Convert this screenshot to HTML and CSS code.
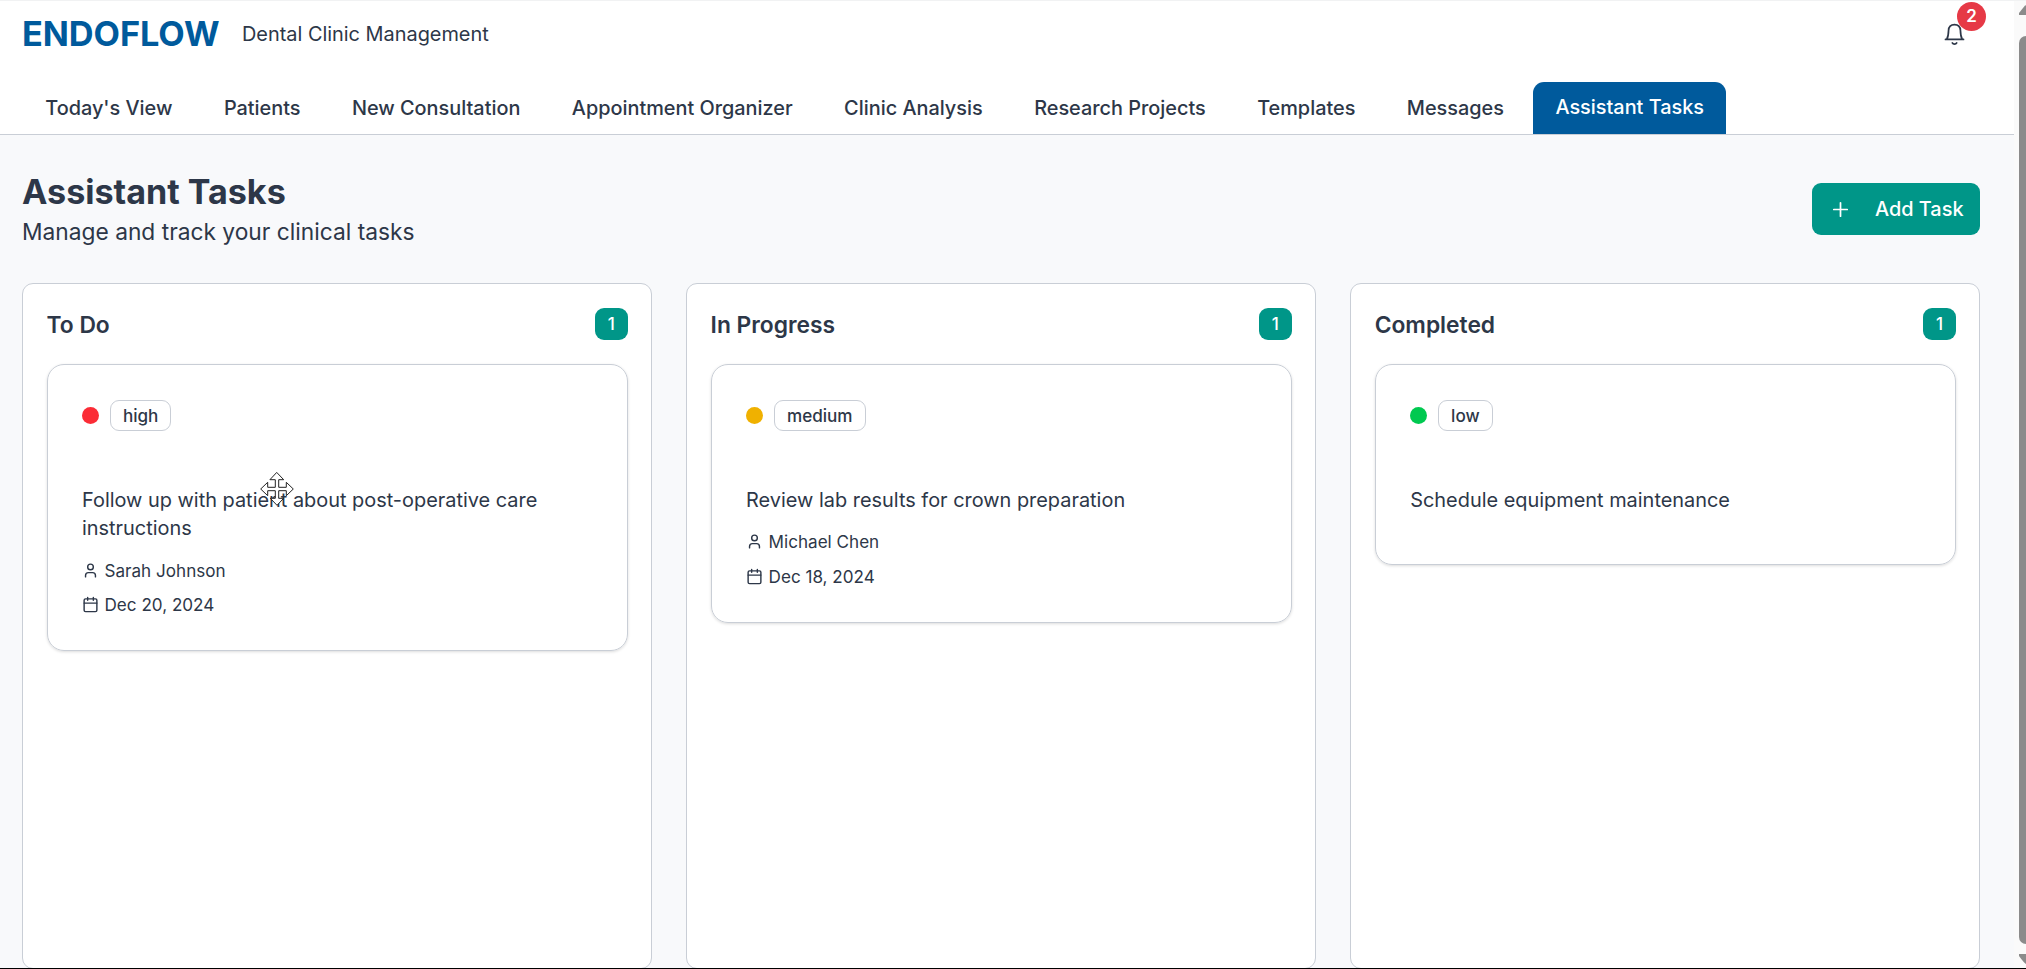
FILE: index.html
```html
<!DOCTYPE html>
<html lang="en">
<head>
<meta charset="utf-8">
<title>ENDOFLOW</title>
<link rel="stylesheet" href="styles.css">
</head>
<body>
<svg class="sprite" aria-hidden="true">
  <symbol id="user" viewBox="0 0 24 24"><path d="M19 21v-2a4 4 0 0 0-4-4H9a4 4 0 0 0-4 4v2"/><circle cx="12" cy="7" r="4"/></symbol>
  <symbol id="calendar" viewBox="0 0 24 24"><path d="M8 2v4M16 2v4M3 10h18"/><rect x="3" y="4" width="18" height="18" rx="2"/></symbol>
</svg>
<div class="app">
  <div class="page">
    <header class="header">
      <div class="brand-row">
        <div class="brand">ENDOFLOW</div>
        <div class="tagline">Dental Clinic Management</div>
        <div class="bell">
          <svg class="bell-icon" viewBox="0 0 24 24"><path d="M2.600 18.200h18.800M4 18c1.200-2.200 1.700-5 1.800-9.200C6 4.700 8.600 2.700 12 2.700s6 2 6.200 6.100c.1 4.200.6 7 1.800 9.200"/><path d="M9.700 21.800c.9 1.700 3.700 1.700 4.600 0"/></svg>
          <span class="bell-count">2</span>
        </div>
      </div>
      <nav class="tabs">
        <a class="tab">Today's View</a>
        <a class="tab">Patients</a>
        <a class="tab">New Consultation</a>
        <a class="tab">Appointment Organizer</a>
        <a class="tab">Clinic Analysis</a>
        <a class="tab">Research Projects</a>
        <a class="tab">Templates</a>
        <a class="tab">Messages</a>
        <a class="tab active">Assistant Tasks</a>
      </nav>
    </header>
    <main class="main">
      <div class="title-row">
        <div>
          <h1 class="title">Assistant Tasks</h1>
          <p class="subtitle">Manage and track your clinical tasks</p>
        </div>
        <button class="add"><svg class="plus" viewBox="0 0 24 24"><path d="M5 12h14M12 5v14"/></svg><span>Add Task</span></button>
      </div>
      <div class="board">
        <section class="column">
          <div class="column-head"><h2 class="column-title">To Do</h2><span class="count">1</span></div>
          <article class="card">
            <div class="priority"><i class="dot red"></i><span class="pill">high</span></div>
            <p class="task">Follow up with patient about post-operative care instructions</p>
            <div class="meta"><svg class="icon"><use href="#user"/></svg>Sarah Johnson</div>
            <div class="meta"><svg class="icon"><use href="#calendar"/></svg>Dec 20, 2024</div>
          </article>
        </section>
        <section class="column">
          <div class="column-head"><h2 class="column-title">In Progress</h2><span class="count">1</span></div>
          <article class="card">
            <div class="priority"><i class="dot amber"></i><span class="pill">medium</span></div>
            <p class="task">Review lab results for crown preparation</p>
            <div class="meta"><svg class="icon"><use href="#user"/></svg>Michael Chen</div>
            <div class="meta"><svg class="icon"><use href="#calendar"/></svg>Dec 18, 2024</div>
          </article>
        </section>
        <section class="column">
          <div class="column-head"><h2 class="column-title">Completed</h2><span class="count">1</span></div>
          <article class="card">
            <div class="priority"><i class="dot green"></i><span class="pill">low</span></div>
            <p class="task">Schedule equipment maintenance</p>
          </article>
        </section>
      </div>
    </main>
  </div>
  <div class="scrollbar">
    <svg class="arrow" viewBox="0 0 11 10"><path d="M0 10V8L6 0.500Q7 0 11 0V10Z"/></svg>
    <div class="thumb"></div>
    <svg class="arrow" viewBox="0 0 11 10"><path d="M0 0H11V10H7Q5.500 9.500 0 2Z"/></svg>
  </div>
</div>
<svg class="cursor" viewBox="0 0 34 34"><path d="M17 .7l6.700 7H18.700v7.600h7.600v-5l7 6.700-7 6.700v-5h-7.600v7.600h5L17 33.300l-6.700-7h5v-7.600H7.700v5L.7 17l7-6.700v5h7.600V7.700h-5z"/></svg>
</body>
</html>
```

FILE: styles.css
```css
* { box-sizing: border-box; }
body {
  margin: 0;
  font-family: Inter, "Liberation Sans", sans-serif;
  color: #2d3748;
  background: #f8f9fb;
}
h1, h2, p { margin: 0; }
svg { display: block; fill: none; stroke: currentColor; stroke-width: 2; stroke-linecap: round; stroke-linejoin: round; }
.sprite { position: absolute; width: 0; height: 0; }
.app { display: flex; height: 969px; overflow: hidden; border-top: 1px solid #f1f2f3; border-bottom: 1px solid #000; }
.page { flex: 1; display: flex; flex-direction: column; min-width: 0; }
.header { flex: none; height: 134px; background: #fff; border-bottom: 1px solid #c9ced6; display: flex; flex-direction: column; justify-content: space-between; }
.brand-row { display: flex; align-items: center; height: 65px; padding: 0 48px 0 22px; }
.brand { font-size: 34.300px; font-weight: 700; letter-spacing: -0.060px; color: #005a9c; width: 220px; }
.tagline { font-size: 19.900px; flex: 1; padding-top: 1px; }
.bell { position: relative; width: 23px; height: 23px; }
.bell-icon { width: 23px; height: 23px; stroke-width: 1.800; }
.bell-count {
  position: absolute; left: 14px; top: -20px; width: 29px; height: 29px; border-radius: 50%;
  background: #e63946; color: #fff; font-size: 17px; font-weight: 600; line-height: 29px; text-align: center;
}
.tabs { display: flex; align-items: flex-end; gap: 5.700px; padding-left: 22.400px; }
.tab { padding: 0 22.900px; height: 52px; font-size: 19.880px; font-weight: 500; line-height: 53px; white-space: nowrap; }
.tab.active { background: #005a9c; color: #fff; border-radius: 11px 11px 0 0; line-height: 50px; padding: 0 22.400px; margin-left: 0.500px; }
.main { flex: 1; padding: 33.500px 34px 0 22px; }
.title-row { display: flex; justify-content: space-between; align-items: center; height: 81px; margin-bottom: 33.500px; }
.title { font-size: 34.100px; font-weight: 700; line-height: 46px; }
.subtitle { font-size: 22.750px; line-height: 34px; }
.add {
  display: flex; align-items: center; height: 52px; width: 168.500px; padding: 0 16.500px 0 17px; border: 0; border-radius: 9px;
  justify-content: space-between; background: #009688; color: #fff; font: 500 19.900px Inter, sans-serif;
}
.plus { width: 23px; height: 23px; stroke-width: 1.800; }
.board { display: grid; grid-template-columns: repeat(3, 1fr); gap: 34.300px; }
.column { height: 686px; background: #fff; border: 1px solid #c9ced6; border-radius: 11px; padding: 23.500px 23px 0 23.500px; }
.column-head { display: flex; justify-content: space-between; align-items: center; height: 33px; margin-bottom: 23.500px; }
.column-title { font-size: 22.800px; font-weight: 600; }
.count { width: 33px; height: 32px; border-radius: 9px; background: #009688; color: #fff; font-size: 17px; font-weight: 500; line-height: 32px; text-align: center; }
.card { border: 1px solid #c9ced6; border-radius: 17px; padding: 35px 34px 34px; box-shadow: 0 1px 3px rgba(0, 0, 0, .14); }
.priority { display: flex; align-items: center; gap: 11.400px; height: 31px; margin-bottom: 55px; }
.dot { width: 17px; height: 17px; border-radius: 50%; }
.red { background: #fb2c36; }
.amber { background: #f0b100; }
.green { background: #00c950; }
.pill { height: 31px; padding: 0 12px; border: 1px solid #c9ced6; border-radius: 9px; font-size: 17.100px; font-weight: 500; line-height: 29px; }
.task { font-size: 19.920px; line-height: 28.400px; margin-bottom: 16px; padding-left: 0.500px; }
.meta { display: flex; align-items: center; gap: 6px; height: 23px; font-size: 17.100px; margin-bottom: 11.200px; }
.meta:last-child { margin-bottom: 0; }
.icon { width: 17px; height: 17px; }
.scrollbar { width: 12px; padding: 4px 0; padding-left: 5px; background: #fafafa; display: flex; flex-direction: column; }
.arrow { flex: none; width: 11px; height: 10px; fill: #8b8b8b; stroke: none; }
.thumb { flex: 1; width: 14px; margin: 21px 0 10px; border-radius: 7px; background: #8b8b8b; }
.cursor { position: absolute; left: 259.500px; top: 472px; width: 34px; height: 34px; fill: #fff; stroke: #222; stroke-width: 1; }
```
